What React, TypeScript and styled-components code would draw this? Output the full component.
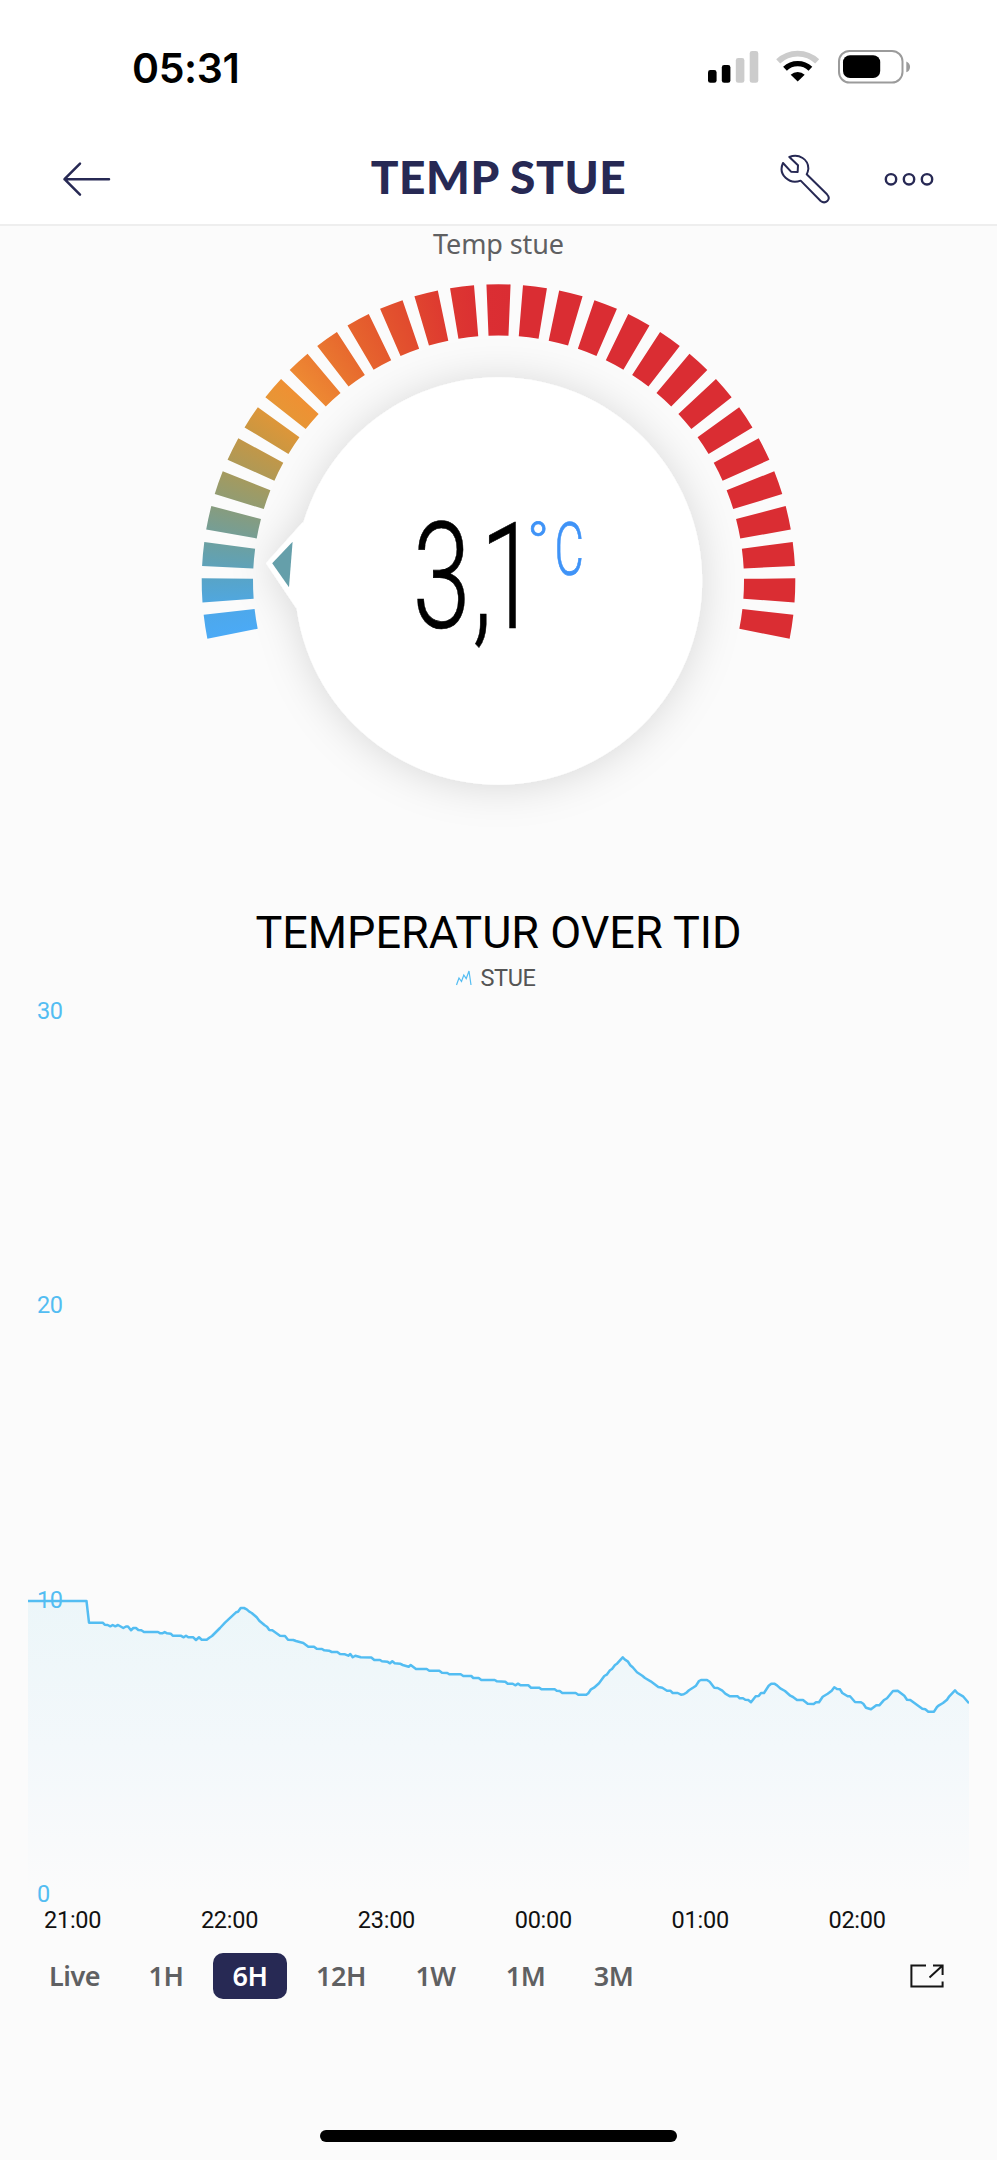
import React from 'react';
import styled, { createGlobalStyle } from 'styled-components';

const navy = '#272954';
const sky = '#53bdf2';

const GlobalStyle = createGlobalStyle`
  body { margin: 0; background: #fbfbfb; }
  * { box-sizing: border-box; }
  svg { display: block; flex: none; }
`;

const Screen = styled.main`
  width: 997px;
  height: 2160px;
  display: flex;
  flex-direction: column;
  background: #fbfbfb;
  overflow: hidden;
`;

const StatusBar = styled.div`
  height: 135px;
  flex: none;
  display: flex;
  justify-content: space-between;
  background: #fff;
  padding: 44px 84px 0 132px;
`;

const Clock = styled.time`
  font: 600 41px/48px Inter, sans-serif;
  letter-spacing: -0.4px;
  color: #000;
`;

const Header = styled.header`
  height: 91px;
  flex: none;
  display: grid;
  grid-template-columns: 280px 1fr 280px;
  background: #fff;
  border-bottom: 2px solid #eeeeee;
`;

const HeaderSide = styled.div<{ $end?: boolean }>`
  display: flex;
  justify-content: ${p => (p.$end ? 'flex-end' : 'flex-start')};
  padding: ${p => (p.$end ? '17px 61px 0 0' : '25px 0 0 60px')};
  gap: 51px;
`;

const Title = styled.h1`
  margin: 0;
  padding-top: 11px;
  text-align: center;
  white-space: nowrap;
  font: 900 46px/62px Lato, sans-serif;
  letter-spacing: 0.6px;
  color: ${navy};
`;

const GaugeLabel = styled.div`
  height: 44px;
  flex: none;
  text-align: center;
  font: 400 27px/36px 'Noto Sans', sans-serif;
  letter-spacing: -0.1px;
  color: #5f6062;
`;

const ChartTitle = styled.h2`
  margin: 39px 0 0;
  flex: none;
  height: 53px;
  text-align: center;
  font: 400 45px/48px Roboto, sans-serif;
  letter-spacing: 0;
  color: #000;
`;

const Legend = styled.div`
  flex: none;
  height: 38px;
  display: flex;
  justify-content: center;
  gap: 9px;
  padding-right: 6px;
  font: 400 23.5px/32px Roboto, sans-serif;
  letter-spacing: -0.4px;
  color: #555;
  svg { margin-top: 8px; }
`;

const Chart = styled.section`
  position: relative;
  flex: none;
  height: 895px;
  padding: 0 28px;
`;

const ScaleLabels = styled.div`
  position: absolute;
  left: 37px;
  top: -3px;
  height: 911px;
  display: flex;
  flex-direction: column;
  justify-content: space-between;
  font: 400 23.5px/28px Roboto, sans-serif;
  letter-spacing: -0.4px;
  color: ${sky};
`;

const TimeAxis = styled.div`
  flex: none;
  display: grid;
  grid-template-columns: repeat(6, 156.9px);
  height: 58px;
  padding: 11px 0 0 44px;
  font: 400 23.5px/28px Roboto, sans-serif;
  letter-spacing: -0.25px;
  color: #111;
`;

const RangeBar = styled.nav`
  flex: none;
  display: flex;
  align-items: center;
  height: 46px;
  padding: 0 53px 0 30px;
`;

const RangeButton = styled.button<{ $width: number; $active?: boolean }>`
  width: ${p => p.$width}px;
  height: 46px;
  margin-right: 10px;
  padding: 0 0 1px;
  border: 0;
  border-radius: 10px;
  background: ${p => (p.$active ? navy : 'transparent')};
  color: ${p => (p.$active ? '#fff' : '#5f6062')};
  font: 600 27px/45px 'Noto Sans', sans-serif;
  letter-spacing: -0.5px;
`;

const Expand = styled.div`
  margin-left: auto;
`;

const HomeIndicator = styled.div`
  width: 357px;
  height: 12px;
  margin: auto auto 18px;
  border-radius: 6px;
  background: #000;
`;

const CX = 498.5;
const CY = 311;
const OUTER = 296.8;
const INNER = 245.5;
const COUNT = 29;
const PITCH = 7.063;
const HALF = 2.33;

const stops: [number, number, number, number][] = [
  [0, 75, 170, 246],
  [1, 82, 165, 212],
  [2, 100, 161, 173],
  [3, 125, 157, 138],
  [4, 156, 155, 102],
  [5, 184, 152, 78],
  [6, 213, 150, 59],
  [7, 240, 150, 52],
  [8, 236, 131, 50],
  [9, 232, 111, 47],
  [10, 229, 94, 45],
  [11, 226, 79, 46],
  [12, 223, 63, 47],
  [13, 220, 49, 50],
  [14, 218, 45, 51],
];

function colorAt(pos: number) {
  const p = Math.max(0, Math.min(14, pos));
  const i = Math.min(13, Math.floor(p));
  const t = p - i;
  const mix = [1, 2, 3].map(k => Math.round(stops[i][k] + (stops[i + 1][k] - stops[i][k]) * t));
  return `rgb(${mix.join(',')})`;
}

function polar(r: number, deg: number): [number, number] {
  const a = (deg * Math.PI) / 180;
  return [CX + r * Math.sin(a), CY - r * Math.cos(a)];
}

function Gauge() {
  const ticks = Array.from({ length: COUNT }, (_, i) => {
    const mid = (i - 14) * PITCH;
    const a = polar(OUTER, mid - HALF);
    const b = polar(OUTER, mid + HALF);
    const c = polar(INNER, mid + HALF);
    const d = polar(INNER, mid - HALF);
    return {
      i,
      a,
      b,
      d: `M${a} A${OUTER} ${OUTER} 0 0 1 ${b} L${c} A${INNER} ${INNER} 0 0 0 ${d} Z`,
    };
  });
  return (
    <svg width="997" height="600" viewBox="0 0 997 600">
      <defs>
        <filter id="soft" x="-30%" y="-30%" width="160%" height="160%">
          <feDropShadow dx="0" dy="2" stdDeviation="21" floodColor="#000" floodOpacity="0.14" />
        </filter>
        {ticks.map(t => (
          <linearGradient key={t.i} id={`t${t.i}`} gradientUnits="userSpaceOnUse" x1={t.a[0]} y1={t.a[1]} x2={t.b[0]} y2={t.b[1]}>
            <stop offset="0" stopColor={colorAt(t.i - 0.33)} />
            <stop offset="1" stopColor={colorAt(t.i + 0.33)} />
          </linearGradient>
        ))}
      </defs>
      <g filter="url(#soft)" fill="#fff">
        <circle cx={CX} cy={CY} r="203.7" />
        <path d="M266 293.3 L302.7 252.3 L320 295 L296.3 338.3 Z" />
      </g>
      {ticks.map(t => (
        <path key={t.i} d={t.d} fill={`url(#t${t.i})`} />
      ))}
      <path d="M272.2 293.3 L292.6 271.7 L289 317.3 Z" fill="#659faa" />
      <g fontFamily="Roboto, sans-serif" fontWeight="300">
        <text transform="translate(412.5 358) scale(0.71 1)" x="0 84 95" y="0" fontSize="148" fill="#000" stroke="#000" strokeWidth="0.6">3,1</text>
        <g fill="#3f93f7" stroke="#3f93f7" strokeWidth="0.7">
          <text x="527" y="293.5" fontSize="59">°</text>
          <text transform="translate(554.5 305.3) scale(0.61 1)" fontSize="74">C</text>
        </g>
      </g>
    </svg>
  );
}

const line =
  '28,1601 86.5,1601 89,1622.7 102.7,1622.7 104.7,1624.7 107.7,1625 110.3,1626.3 112.7,1625 115.3,1626.3 118,1625 123.3,1628 126,1626.5 128,1626.5 131,1630.3 133.3,1628 136,1628 138.3,1630 141.3,1630.3 144,1632 158,1632 160.3,1633.3 162.3,1633.3 164.7,1632 167,1633.3 170.7,1633.7 172.7,1635.7 180.7,1635.7 183.7,1637.3 186,1635.7 188.3,1637.3 193.3,1637.3 196,1640 199,1637.3 201.7,1639.7 206.7,1639.7 209.3,1637.7 212,1636 220,1628 225,1622.7 236,1612.3 238,1611.7 240.7,1608 244,1608 246.7,1609.3 249.3,1611.7 251.7,1613 256.7,1617.3 259.3,1620.7 264.7,1625.3 267,1626.7 269.3,1630 272.3,1630.3 280,1635.7 285,1636 288,1639.7 293.3,1640 296,1641 303.3,1643 308.3,1646.7 314,1646.7 316.7,1648.7 322,1649 324.3,1650.3 329,1650.7 331.7,1652 337.3,1652 340,1654 345,1654.3 348.3,1655.7 350.3,1654 352.7,1657.3 355.3,1655.7 360.7,1657.3 371.3,1657.5 374.3,1660 380,1660 382,1661.3 387.3,1661.7 390,1663.3 392.3,1661.3 394.7,1663.3 400,1663.7 402.7,1665 408.7,1666.7 410.7,1665 416,1669 426.7,1669 429.3,1670.7 439.3,1670.7 442,1672.7 447.3,1673 449.3,1674.3 460.7,1674.3 463.3,1676 471.3,1676 473.3,1678 478.7,1678 481.3,1680 494.7,1680 497,1681.3 505.3,1681.7 507.7,1683.7 512.7,1683.7 515.3,1685.3 518,1683.7 520.7,1685.3 528.3,1685.3 531,1687.7 539,1687.7 541.7,1689.3 554.7,1689.3 556.7,1690.7 559.7,1691 562.3,1693 575.7,1693 578.3,1694.7 586.3,1694.7 588.3,1693.3 591,1689.3 594,1687.7 599,1683.3 604.3,1676 606.7,1674.7 610,1670.3 612,1669 615,1665 617,1663.7 622.7,1657.3 625,1659.7 627.7,1661.3 630.3,1665.3 632.7,1667.3 637,1672.3 642.3,1675.7 645,1678 650.7,1681.3 658.3,1687 662.3,1687.8 667,1690.7 670.3,1690.7 672.7,1693 677.7,1693 681,1694.7 683.7,1694.3 686.3,1692.7 689,1690.3 693.7,1687.3 696,1685.7 699,1681 701,1680 707,1680 709.7,1681.7 714.3,1687.7 717.7,1688 722.3,1690.7 725.3,1693.7 730,1696.3 737.7,1696.3 739.7,1698.3 743,1698.3 745.3,1699.7 748.3,1700 751,1702.3 755.7,1696.3 758.7,1696 761,1693 764,1693 768.7,1685.7 771.3,1683.7 774.3,1683.7 777,1685.3 780.3,1688.3 785,1691 790.3,1695.7 793,1697 797,1700 803,1700 807.7,1703.7 813.7,1704 816,1702.3 819,1702.3 822.7,1696.7 827.7,1693.7 831.7,1690.7 834.3,1687.3 837,1689 840,1689.3 842.3,1693 847.7,1696.3 850,1696.3 855,1702 861,1702.3 863.3,1703.7 866,1707.7 871,1709.3 876.3,1705.3 879.3,1705.3 883.7,1700.3 887,1698.3 893,1691 897.7,1690.7 904.3,1695.7 907,1699.7 910.3,1700 922.3,1708.7 925.3,1709.3 928.3,1711.7 934,1711.7 937,1707 939,1705.3 943,1703 947,1699.7 949.3,1696.3 955,1690.3 957.3,1693 963,1696.3 969,1703.3';

function TemperaturePlot() {
  return (
    <svg width="941" height="895" viewBox="28 1000 941 895">
      <defs>
        <linearGradient id="area" gradientUnits="userSpaceOnUse" x1="0" y1="1600" x2="0" y2="1893">
          <stop offset="0" stopColor="#ecf6f9" />
          <stop offset="0.5" stopColor="#f3f8fb" />
          <stop offset="1" stopColor="#fbfbfb" />
        </linearGradient>
      </defs>
      <polygon points={`28,1895 ${line} 969,1895`} fill="url(#area)" />
      <polyline points={line} fill="none" stroke={sky} strokeWidth="2.5" strokeLinejoin="round" />
    </svg>
  );
}

function StatusIcons() {
  return (
    <svg width="208" height="44" viewBox="705 44 208 44">
      <rect x="708" y="70" width="8.6" height="12.8" rx="2.4" />
      <rect x="721.8" y="65" width="8.6" height="17.8" rx="2.4" />
      <rect x="735.8" y="58" width="8.6" height="24.8" rx="2.4" fill="#ccc" />
      <rect x="749.7" y="51" width="8.6" height="31.8" rx="2.4" fill="#ccc" />
      <g fill="none">
        <path d="M778.2 61.4 A28.3 28.3 0 0 1 817.2 61.4" stroke="#ccc" strokeWidth="5.8" />
        <path d="M785 68.7 A18.4 18.4 0 0 1 810.4 68.7" stroke="#000" strokeWidth="5.4" />
      </g>
      <path d="M790.7 74.7 A10.2 10.2 0 0 1 804.7 74.7 L797.7 81.6 Z" />
      <rect x="839" y="51" width="63.5" height="31.5" rx="10.5" fill="none" stroke="#9b9b9b" strokeWidth="2" />
      <rect x="843" y="55.3" width="37.2" height="22.8" rx="7" />
      <path d="M906.3 61.5 C911.3 63.2 911.3 70.6 906.3 72.3 Z" fill="#9b9b9b" />
    </svg>
  );
}

const ranges: { label: string; width: number; active?: boolean }[] = [
  { label: 'Live', width: 89 },
  { label: '1H', width: 74 },
  { label: '6H', width: 74, active: true },
  { label: '12H', width: 88 },
  { label: '1W', width: 81 },
  { label: '1M', width: 79 },
  { label: '3M', width: 77 },
];

export default function App() {
  return (
    <Screen>
      <GlobalStyle />
      <StatusBar>
        <Clock>05:31</Clock>
        <StatusIcons />
      </StatusBar>
      <Header>
        <HeaderSide>
          <svg width="54" height="38" viewBox="60 160 54 38" fill="none" stroke={navy} strokeWidth="2.5" strokeLinecap="round" strokeLinejoin="round">
            <path d="M109 179.2 H64.5 M80 163.7 L64.5 179.2 L80 194.7" />
          </svg>
        </HeaderSide>
        <Title>TEMP STUE</Title>
        <HeaderSide $end>
          <svg width="54" height="54" viewBox="845 456 162 162" fill="none" stroke={navy} strokeWidth="6" strokeLinejoin="round">
            <path d="M876 471 C905 460 934 478 933 507 Q932 515 928 523 L989 583 C1003 598 984 614 970 603 L910 542 C876 555 841 524 857 489 L881 515 L901 516 L902 496 Z" />
          </svg>
          <svg width="52" height="54" viewBox="887 152 52 54" fill="none" stroke={navy} strokeWidth="2.4">
            <circle cx="894" cy="179.3" r="5.2" />
            <circle cx="912" cy="179.3" r="5.2" />
            <circle cx="930" cy="179.3" r="5.2" />
          </svg>
        </HeaderSide>
      </Header>
      <GaugeLabel>Temp stue</GaugeLabel>
      <Gauge />
      <ChartTitle>TEMPERATUR OVER TID</ChartTitle>
      <Legend>
        <svg width="16" height="16" viewBox="0 0 16 16" fill="none" stroke={sky} strokeWidth="1.2">
          <path d="M0.5 15 L3 8 L5.5 11.5 L7.8 5 L10.2 8.7 L13 1 L15 15" />
        </svg>
        STUE
      </Legend>
      <Chart>
        <TemperaturePlot />
        <ScaleLabels>
          <span>30</span>
          <span>20</span>
          <span>10</span>
          <span>0</span>
        </ScaleLabels>
      </Chart>
      <TimeAxis>
        {['21:00', '22:00', '23:00', '00:00', '01:00', '02:00'].map(t => (
          <span key={t}>{t}</span>
        ))}
      </TimeAxis>
      <RangeBar>
        {ranges.map(r => (
          <RangeButton key={r.label} $width={r.width} $active={r.active}>
            {r.label}
          </RangeButton>
        ))}
        <Expand>
          <svg width="34" height="24" viewBox="0 0 34 24" fill="none" stroke="#151515" strokeWidth="2">
            <path d="M16 1.4 H1.4 V22.5 H32.6 V17.5 M23 1.4 H32.6 V11 M32 2 L19.5 13.5" />
          </svg>
        </Expand>
      </RangeBar>
      <HomeIndicator />
    </Screen>
  );
}
